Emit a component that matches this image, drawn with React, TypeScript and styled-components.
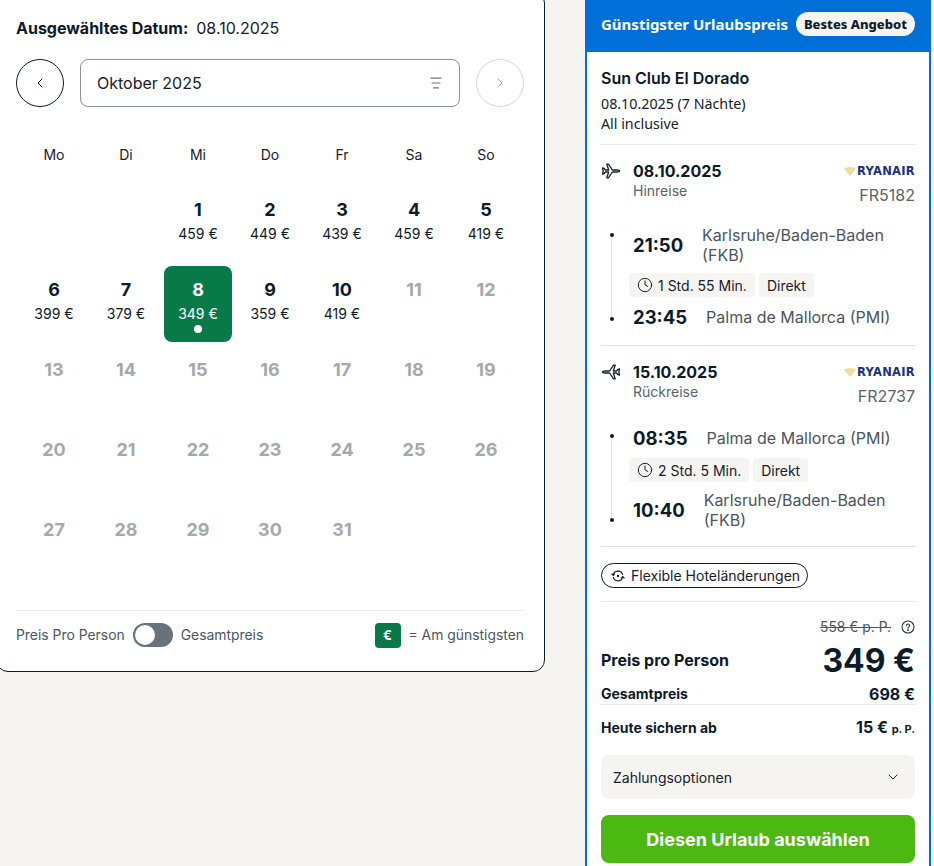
import React from 'react';
import styled, { createGlobalStyle } from 'styled-components';
import { ChevronLeft, ChevronRight, ChevronDown, Clock } from 'lucide-react';

const GlobalStyle = createGlobalStyle`
    html, body {
        margin: 0;
        padding: 0;
        height: 866px;
        overflow: hidden;
        background: #f5f4f0;
        font-family: Inter, "Liberation Sans", sans-serif;
        color: #0c1b2a;
    }
`;

const Page = styled.div`
    display: flex;
    align-items: flex-start;
    gap: 40px;
    width: 940px;
    height: 866px;
    margin-left: -4px;
    overflow: hidden;
`;

const CalendarCard = styled.section`
    box-sizing: border-box;
    flex: none;
    width: 549px;
    height: 681px;
    margin-top: -9px;
    padding: 26px 20px 0 19px;
    background: #fff;
    border: 1px solid #0c1b2a;
    border-radius: 12px;
`;

const SelectedDate = styled.div`
    display: flex;
    align-items: center;
    gap: 8px;
    height: 20px;
    font-size: 16px;
    color: #17202c;
`;

const SelectedLabel = styled.strong`
    font-weight: 700;
    font-size: 16px;
    color: #0c1b2a;
`;

const MonthBar = styled.div`
    display: flex;
    align-items: center;
    gap: 16px;
    margin-top: 21px;
`;

const RoundButton = styled.div<{ $disabled?: boolean }>`
    box-sizing: border-box;
    flex: none;
    display: flex;
    align-items: center;
    justify-content: center;
    width: 48px;
    height: 48px;
    border-radius: 50%;
    border: 1px solid ${(p) => (p.$disabled ? '#d6d8da' : '#0c1b2a')};
    color: ${(p) => (p.$disabled ? '#a4a9ae' : '#0c1b2a')};
`;

const MonthSelect = styled.div`
    flex: 1;
    box-sizing: border-box;
    display: flex;
    align-items: center;
    justify-content: space-between;
    height: 48px;
    padding: 0 16px;
    border: 1px solid #8d9296;
    border-radius: 8px;
    font-size: 16px;
    color: #17202c;
`;

const Grid = styled.div`
    display: grid;
    grid-template-columns: repeat(7, 68px);
    column-gap: 4px;
    padding: 0 4px;
`;

const WeekRow = styled(Grid)`
    margin-top: 37px;
    height: 20px;
    align-items: center;
`;

const WeekDay = styled.div`
    text-align: center;
    font-size: 14px;
    color: #17202c;
`;

const DaysGrid = styled(Grid)`
    margin-top: 22px;
    grid-auto-rows: 76px;
    row-gap: 4px;
`;

const DayCell = styled.div<{ $selected?: boolean }>`
    position: relative;
    box-sizing: border-box;
    display: flex;
    flex-direction: column;
    align-items: center;
    padding-top: 13px;
    border-radius: 8px;
    background: ${(p) => (p.$selected ? '#087a4a' : 'transparent')};
    color: ${(p) => (p.$selected ? '#fff' : '#0c1b2a')};
`;

const DayNumber = styled.div<{ $muted?: boolean }>`
    font-size: 18px;
    line-height: 22px;
    font-weight: 700;
    color: ${(p) => (p.$muted ? '#a4a9ae' : 'inherit')};
`;

const DayPrice = styled.div`
    margin-top: 3px;
    font-size: 14px;
    line-height: 20px;
`;

const SelectedDot = styled.span`
    position: absolute;
    left: 50%;
    bottom: 9px;
    width: 8px;
    height: 8px;
    margin-left: -4px;
    border-radius: 50%;
    background: #fff;
`;

const Legend = styled.div`
    display: flex;
    align-items: center;
    justify-content: space-between;
    height: 48px;
    margin-top: 28px;
    border-top: 1px solid #e9eaea;
    font-size: 13.9px;
    color: #4b5560;
`;

const LegendGroup = styled.div`
    display: flex;
    align-items: center;
    gap: 8px;
`;

const Toggle = styled.span`
    position: relative;
    display: block;
    width: 40px;
    height: 24px;
    border-radius: 12px;
    background: #67727b;
`;

const ToggleKnob = styled.span`
    position: absolute;
    top: 2px;
    left: 2px;
    width: 20px;
    height: 20px;
    border-radius: 50%;
    background: #fff;
`;

const EuroBadge = styled.span`
    display: flex;
    align-items: center;
    justify-content: center;
    width: 26px;
    height: 25px;
    border-radius: 4px;
    background: #087a4a;
    color: #fff;
    font-size: 13px;
    font-weight: 700;
`;

const OfferCard = styled.aside`
    box-sizing: border-box;
    flex: none;
    width: 346px;
    height: 900px;
    margin-top: -10px;
    border: 2px solid #0070d8;
    border-radius: 10px;
    background: #fff;
`;

const OfferHeader = styled.header`
    display: flex;
    align-items: center;
    justify-content: space-between;
    height: 60px;
    padding: 4px 14px 0;
    box-sizing: border-box;
    background: #0070d8;
`;

const OfferTitle = styled.h2`
    margin: 0;
    font-family: "Noto Sans", sans-serif;
    font-size: 15px;
    font-weight: 700;
    color: #fff;
`;

const BestBadge = styled.span`
    display: flex;
    align-items: center;
    height: 24px;
    padding: 0 8px;
    border-radius: 12px;
    background: #f5f4f0;
    font-family: "Noto Sans", sans-serif;
    font-size: 13px;
    font-weight: 800;
    color: #0c1b2a;
`;

const OfferBody = styled.div`
    padding: 0 14px;
`;

const HotelBlock = styled.div`
    height: 93px;
    box-sizing: border-box;
    padding-top: 16px;
    border-bottom: 1px solid #e6e7e8;
`;

const HotelName = styled.h3`
    margin: 0;
    font-size: 16px;
    line-height: 20px;
    font-weight: 600;
`;

const HotelMeta = styled.div<{ $first?: boolean }>`
    margin-top: ${(p) => (p.$first ? '6px' : '0')};
    font-family: "Noto Sans", sans-serif;
    font-size: 14.25px;
    line-height: 20px;
    color: #17202c;
`;

const FlightBlock = styled.div`
    height: 201px;
    box-sizing: border-box;
    padding-top: 16px;
    border-bottom: 1px solid #e0e1e2;
`;

const FlightHead = styled.div`
    display: flex;
    justify-content: space-between;
    height: 52px;
`;

const FlightHeadLeft = styled.div`
    display: flex;
    gap: 12px;
`;

const PlaneSlot = styled.div`
    width: 20px;
    color: #17202c;
`;

const FlightDate = styled.div`
    font-size: 16px;
    line-height: 20px;
    font-weight: 700;
`;

const FlightDirection = styled.div`
    font-size: 14px;
    line-height: 20px;
    color: #5a636d;
`;

const CarrierColumn = styled.div`
    display: flex;
    flex-direction: column;
    align-items: flex-end;
`;

const CarrierLogo = styled.div`
    display: flex;
    align-items: center;
    gap: 1px;
    height: 20px;
    font-family: "DejaVu Sans", sans-serif;
    font-size: 11.5px;
    font-weight: 700;
    letter-spacing: 0.3px;
    color: #1c2f80;
`;

const FlightNumber = styled.div`
    margin-top: 4px;
    font-size: 16px;
    line-height: 20px;
    color: #5a636d;
`;

const Timeline = styled.div`
    position: relative;
    margin-top: 12px;
    padding-left: 32px;
    &::before {
        content: '';
        position: absolute;
        left: 10px;
        top: 10px;
        bottom: 10px;
        width: 1px;
        background: #e0e1e2;
    }
`;

const Stop = styled.div<{ $height: number }>`
    position: relative;
    display: flex;
    align-items: center;
    gap: 19px;
    height: ${(p) => p.$height}px;
`;

const StopDot = styled.span<{ $pos: 'top' | 'bottom' }>`
    position: absolute;
    left: -23px;
    ${(p) => (p.$pos === 'top' ? 'top: 8px;' : 'bottom: 8px;')}
    width: 4px;
    height: 4px;
    border-radius: 50%;
    background: #0c1b2a;
`;

const StopTime = styled.div`
    flex: none;
    font-size: 18.5px;
    font-weight: 700;
    line-height: 24px;
`;

const StopPlace = styled.div`
    font-size: 16px;
    line-height: 20px;
    color: #4b5560;
`;

const Chips = styled.div`
    display: flex;
    gap: 4px;
    margin: 8px 0 8px -4px;
`;

const Chip = styled.span`
    display: flex;
    align-items: center;
    gap: 5px;
    height: 24px;
    padding: 0 8px;
    border-radius: 4px;
    background: #f5f4f0;
    font-size: 14px;
    color: #17202c;
`;

const PerkBlock = styled.div`
    height: 55px;
    box-sizing: border-box;
    padding-top: 16px;
    border-bottom: 1px solid #e6e7e8;
`;

const PerkPill = styled.span`
    display: inline-flex;
    align-items: center;
    box-sizing: border-box;
    gap: 6px;
    height: 25px;
    padding: 0 7px 0 9px;
    border: 1px solid #0c1b2a;
    border-radius: 13px;
    font-size: 14px;
    color: #17202c;
`;

const OldPriceRow = styled.div`
    display: flex;
    align-items: center;
    justify-content: flex-end;
    gap: 10px;
    height: 20px;
    margin-top: 15px;
    font-size: 13.8px;
    color: #4b5560;
`;

const OldPrice = styled.s`
    text-decoration-thickness: 1px;
`;

const PriceRow = styled.div`
    display: flex;
    align-items: center;
    justify-content: space-between;
    height: 40px;
    margin-top: 3px;
`;

const PriceLabel = styled.div`
    font-size: 16px;
    font-weight: 700;
`;

const BigPrice = styled.div`
    font-size: 32px;
    font-weight: 700;
`;

const TotalRow = styled.div`
    display: flex;
    align-items: center;
    justify-content: space-between;
    height: 21px;
    margin-top: 3px;
    font-size: 14px;
    font-weight: 700;
    border-bottom: 1px solid #e6e7e8;
`;

const TotalValue = styled.span`
    font-size: 16px;
`;

const TodayRow = styled.div`
    display: flex;
    align-items: center;
    justify-content: space-between;
    height: 24px;
    margin-top: 10px;
    font-size: 14px;
    font-weight: 700;
`;

const TodayPrice = styled.span`
    font-size: 16px;
    font-weight: 700;
`;

const TodaySuffix = styled.span`
    font-size: 11px;
`;

const PaymentBox = styled.div`
    display: flex;
    align-items: center;
    justify-content: space-between;
    height: 44px;
    margin-top: 16px;
    padding: 0 14px 0 12px;
    box-sizing: border-box;
    border-radius: 8px;
    background: #f5f4f0;
    font-size: 14px;
    color: #17202c;
`;

const SelectButton = styled.div`
    display: flex;
    align-items: center;
    justify-content: center;
    height: 48px;
    margin-top: 16px;
    border-radius: 8px;
    background: #4cb812;
    color: #fff;
    font-size: 18px;
    font-weight: 700;
`;

const FilterIcon = () => (
    <svg width="14" height="14" viewBox="0 0 14 14" fill="none" stroke="#6f767d" strokeWidth="1.2" strokeLinecap="round">
        <path d="M2 2.200h10M3 7h8M4.500 11.800h5" />
    </svg>
);

const OutboundPlane = () => (
    <svg width="20" height="20" viewBox="0 0 20 20" fill="none" stroke="currentColor" strokeWidth="1.3" strokeLinejoin="round">
        <path d="M1.500 7l1.500 .3 1.500 1.700h3.200L5.800 3.200h1.600L11.400 9h4.200c1.500 0 2.900 .5 2.900 1s-1.400 1-2.900 1h-4.200l-4 5.800H5.800L7.700 11H4.500L3 12.700l-1.500 .3 .7-3z" />
    </svg>
);

const ReturnPlane = () => (
    <svg width="20" height="20" viewBox="0 0 20 20" fill="none" stroke="currentColor" strokeWidth="1.3" strokeLinejoin="round">
        <path d="M18.500 7l-1.500 .3-1.500 1.700h-3.200l1.900-5.800h-1.600L8.600 9H4.400C2.900 9 1.500 9.500 1.500 10s1.400 1 2.900 1h4.200l4 5.800h1.600L12.300 11h3.200l1.500 1.700 1.500 .3-.7-3z" />
    </svg>
);

const Harp = () => (
    <svg width="12" height="9" viewBox="0 0 12 9">
        <path d="M0 1.500C3 -.3 9 -.3 12 1.500 10 4 8 6.500 6 9 4 6.500 2 4 0 1.500z" fill="#eedc9a" />
    </svg>
);

const ChangeIcon = () => (
    <svg width="14" height="14" viewBox="0 0 14 14" fill="none" stroke="#17202c" strokeWidth="1.1" strokeLinecap="round" strokeLinejoin="round">
        <path d="M2.200 6.200a4.900 4.900 0 0 1 9.500 -.6M11.800 7.800a4.900 4.900 0 0 1 -9.500 .6" />
        <path d="M.8 5l1.400 1.400L3.600 5M13.200 9l-1.400 -1.400L10.400 9" />
        <circle cx="7" cy="7" r="1.200" fill="#17202c" stroke="none" />
    </svg>
);

const HelpIcon = () => (
    <svg width="14" height="14" viewBox="0 0 14 14" fill="none" stroke="#2b3540" strokeWidth="1.1" strokeLinecap="round">
        <circle cx="7" cy="7" r="6" />
        <path d="M5.400 5.600a1.600 1.600 0 1 1 2.400 1.400c-.5 .3-.8 .6-.8 1.200" />
        <circle cx="7" cy="10.100" r=".4" />
    </svg>
);

interface DayData {
    day: number;
    price?: string;
}

const activeDays: DayData[] = [
    { day: 1, price: '459 €' },
    { day: 2, price: '449 €' },
    { day: 3, price: '439 €' },
    { day: 4, price: '459 €' },
    { day: 5, price: '419 €' },
    { day: 6, price: '399 €' },
    { day: 7, price: '379 €' },
    { day: 8, price: '349 €' },
    { day: 9, price: '359 €' },
    { day: 10, price: '419 €' },
];

const allDays: DayData[] = [
    ...activeDays,
    ...Array.from({ length: 21 }, (_, i) => ({ day: i + 11 })),
];

const weekDays = ['Mo', 'Di', 'Mi', 'Do', 'Fr', 'Sa', 'So'];

interface FlightProps {
    date: string;
    direction: string;
    number: string;
    plane: React.ReactNode;
    firstTime: string;
    firstPlace: string;
    firstHeight: number;
    secondTime: string;
    secondPlace: string;
    secondHeight: number;
    duration: string;
}

const Flight: React.FC<FlightProps> = (props) => (
    <FlightBlock>
        <FlightHead>
            <FlightHeadLeft>
                <PlaneSlot>{props.plane}</PlaneSlot>
                <div>
                    <FlightDate>{props.date}</FlightDate>
                    <FlightDirection>{props.direction}</FlightDirection>
                </div>
            </FlightHeadLeft>
            <CarrierColumn>
                <CarrierLogo>
                    <Harp />
                    RYANAIR
                </CarrierLogo>
                <FlightNumber>{props.number}</FlightNumber>
            </CarrierColumn>
        </FlightHead>
        <Timeline>
            <Stop $height={props.firstHeight}>
                <StopDot $pos="top" />
                <StopTime>{props.firstTime}</StopTime>
                <StopPlace>{props.firstPlace}</StopPlace>
            </Stop>
            <Chips>
                <Chip>
                    <Clock size={16} strokeWidth={1.5} />
                    {props.duration}
                </Chip>
                <Chip>Direkt</Chip>
            </Chips>
            <Stop $height={props.secondHeight}>
                <StopDot $pos="bottom" />
                <StopTime>{props.secondTime}</StopTime>
                <StopPlace>{props.secondPlace}</StopPlace>
            </Stop>
        </Timeline>
    </FlightBlock>
);

const App: React.FC = () => {
    return (
        <Page>
            <GlobalStyle />
            <CalendarCard>
                <SelectedDate>
                    <SelectedLabel>Ausgewähltes Datum:</SelectedLabel>
                    08.10.2025
                </SelectedDate>
                <MonthBar>
                    <RoundButton>
                        <ChevronLeft size={16} strokeWidth={1.5} />
                    </RoundButton>
                    <MonthSelect>
                        Oktober 2025
                        <FilterIcon />
                    </MonthSelect>
                    <RoundButton $disabled>
                        <ChevronRight size={16} strokeWidth={1.5} />
                    </RoundButton>
                </MonthBar>
                <WeekRow>
                    {weekDays.map((d) => (
                        <WeekDay key={d}>{d}</WeekDay>
                    ))}
                </WeekRow>
                <DaysGrid>
                    <div />
                    <div />
                    {allDays.map((d) => (
                        <DayCell key={d.day} $selected={d.day === 8}>
                            <DayNumber $muted={!d.price}>{d.day}</DayNumber>
                            {d.price && <DayPrice>{d.price}</DayPrice>}
                            {d.day === 8 && <SelectedDot />}
                        </DayCell>
                    ))}
                </DaysGrid>
                <Legend>
                    <LegendGroup>
                        Preis Pro Person
                        <Toggle>
                            <ToggleKnob />
                        </Toggle>
                        Gesamtpreis
                    </LegendGroup>
                    <LegendGroup>
                        <EuroBadge>€</EuroBadge>= Am günstigsten
                    </LegendGroup>
                </Legend>
            </CalendarCard>
            <OfferCard>
                <OfferHeader>
                    <OfferTitle>Günstigster Urlaubspreis</OfferTitle>
                    <BestBadge>Bestes Angebot</BestBadge>
                </OfferHeader>
                <OfferBody>
                    <HotelBlock>
                        <HotelName>Sun Club El Dorado</HotelName>
                        <HotelMeta $first>08.10.2025 (7 Nächte)</HotelMeta>
                        <HotelMeta>All inclusive</HotelMeta>
                    </HotelBlock>
                    <Flight
                        date="08.10.2025"
                        direction="Hinreise"
                        number="FR5182"
                        plane={<OutboundPlane />}
                        firstTime="21:50"
                        firstPlace="Karlsruhe/Baden-Baden (FKB)"
                        firstHeight={40}
                        secondTime="23:45"
                        secondPlace="Palma de Mallorca (PMI)"
                        secondHeight={24}
                        duration="1 Std. 55 Min."
                    />
                    <Flight
                        date="15.10.2025"
                        direction="Rückreise"
                        number="FR2737"
                        plane={<ReturnPlane />}
                        firstTime="08:35"
                        firstPlace="Palma de Mallorca (PMI)"
                        firstHeight={24}
                        secondTime="10:40"
                        secondPlace="Karlsruhe/Baden-Baden (FKB)"
                        secondHeight={40}
                        duration="2 Std. 5 Min."
                    />
                    <PerkBlock>
                        <PerkPill>
                            <ChangeIcon />
                            Flexible Hoteländerungen
                        </PerkPill>
                    </PerkBlock>
                    <OldPriceRow>
                        <OldPrice>558 € p. P.</OldPrice>
                        <HelpIcon />
                    </OldPriceRow>
                    <PriceRow>
                        <PriceLabel>Preis pro Person</PriceLabel>
                        <BigPrice>349 €</BigPrice>
                    </PriceRow>
                    <TotalRow>
                        <span>Gesamtpreis</span>
                        <TotalValue>698 €</TotalValue>
                    </TotalRow>
                    <TodayRow>
                        <span>Heute sichern ab</span>
                        <TodayPrice>
                            15 € <TodaySuffix>p. P.</TodaySuffix>
                        </TodayPrice>
                    </TodayRow>
                    <PaymentBox>
                        Zahlungsoptionen
                        <ChevronDown size={16} strokeWidth={1.5} />
                    </PaymentBox>
                    <SelectButton>Diesen Urlaub auswählen</SelectButton>
                </OfferBody>
            </OfferCard>
        </Page>
    );
};

export default App;
